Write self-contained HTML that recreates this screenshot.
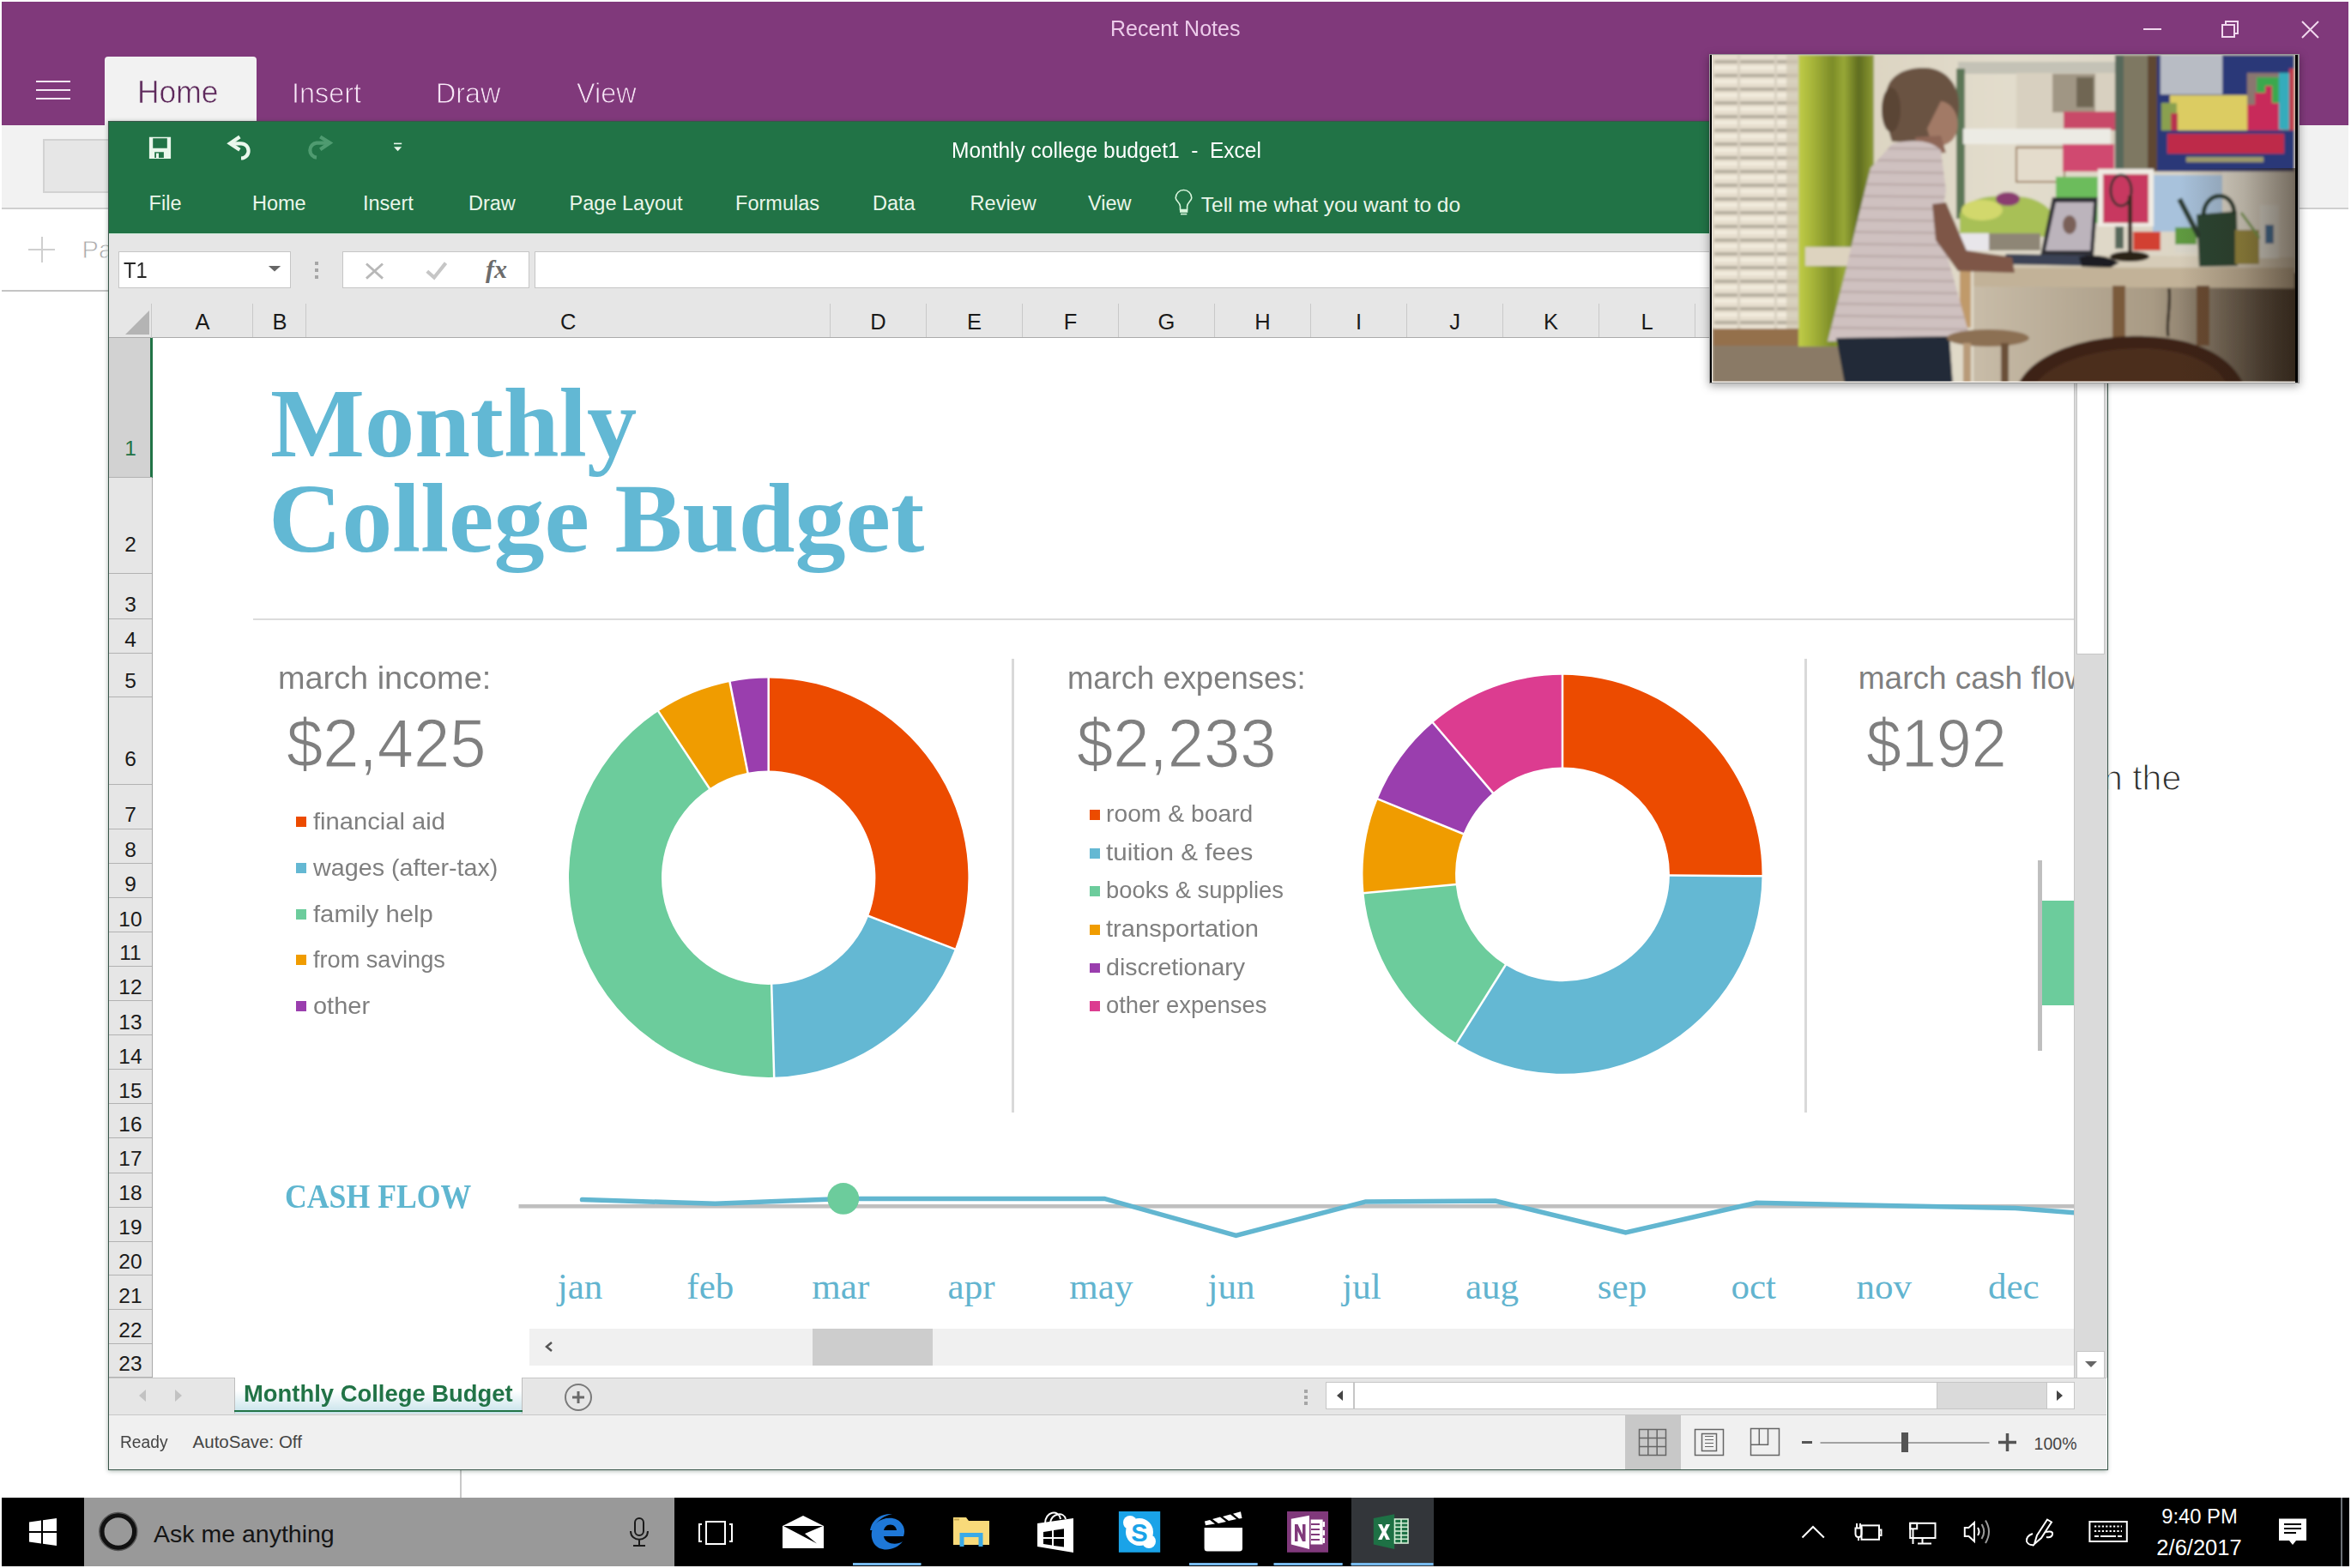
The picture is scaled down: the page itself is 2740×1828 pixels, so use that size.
<!DOCTYPE html><html><head><meta charset="utf-8"><style>
*{margin:0;padding:0;box-sizing:border-box}
html,body{width:2740px;height:1828px;overflow:hidden;background:#fff}
.t{position:absolute;white-space:pre;}
.r{position:absolute}
svg{position:absolute;left:0;top:0}
</style></head><body>
<div class="r" style="left:2.0px;top:2.0px;width:2735.0px;height:144.0px;background:#80397b;"></div>
<div class="r" style="left:42.0px;top:94.0px;width:40.0px;height:2.0px;background:#f4e8f4;"></div>
<div class="r" style="left:42.0px;top:104.0px;width:40.0px;height:2.0px;background:#f4e8f4;"></div>
<div class="r" style="left:42.0px;top:114.0px;width:40.0px;height:2.0px;background:#f4e8f4;"></div>
<div class="r" style="left:122.0px;top:66.0px;width:177.0px;height:80.0px;background:#f2f2f2;border-radius:4px 4px 0 0;"></div>
<div class="t" style="left:159.5px;top:89.5px;font:normal 36.00px/36.00px 'Liberation Sans', sans-serif;color:#5e2a5c;transform:scaleX(0.9850);transform-origin:0 0;-webkit-text-stroke:0.6px #f2f2f2;">Home</div>
<div class="t" style="left:340.3px;top:92.1px;font:normal 33.00px/33.00px 'Liberation Sans', sans-serif;color:#f8e8f8;transform:scaleX(0.9800);transform-origin:0 0;-webkit-text-stroke:0.9px #80397b;">Insert</div>
<div class="t" style="left:508.3px;top:92.1px;font:normal 33.00px/33.00px 'Liberation Sans', sans-serif;color:#f8e8f8;transform:scaleX(0.9800);transform-origin:0 0;-webkit-text-stroke:0.9px #80397b;">Draw</div>
<div class="t" style="left:672.0px;top:92.1px;font:normal 33.00px/33.00px 'Liberation Sans', sans-serif;color:#f8e8f8;transform:scaleX(0.9800);transform-origin:0 0;-webkit-text-stroke:0.9px #80397b;">View</div>
<div class="t" style="left:1294.0px;top:20.9px;font:normal 25.50px/25.50px 'Liberation Sans', sans-serif;color:#eccbea;transform:scaleX(0.9800);transform-origin:0 0;">Recent Notes</div>
<div class="r" style="left:2498.0px;top:33.0px;width:21.0px;height:2.0px;background:#f0d8ee;"></div>
<svg width="2740" height="1828" style="pointer-events:none"><g fill="none" stroke="#f0d8ee" stroke-width="2"><rect x="2590" y="29" width="14" height="14"/><path d="M2594 29V25H2608V39H2604"/><path d="M2683 25L2702 44M2702 25L2683 44"/></g></svg>
<div class="r" style="left:2.0px;top:146.0px;width:2735.0px;height:97.0px;background:#f2f2f2;"></div>
<div class="r" style="left:2.0px;top:242.0px;width:2735.0px;height:2.0px;background:#cfcfcf;"></div>
<div class="r" style="left:50.0px;top:162.0px;width:200.0px;height:63.0px;background:#e6e6e6;border:2px solid #d2d2d2;"></div>
<div class="r" style="left:33.0px;top:290.0px;width:31.0px;height:2.0px;background:#cfcfcf;"></div>
<div class="r" style="left:48.0px;top:276.0px;width:2.0px;height:30.0px;background:#cfcfcf;"></div>
<div class="t" style="left:95.6px;top:276.8px;font:normal 29.00px/29.00px 'Liberation Sans', sans-serif;color:#a8a8a8;-webkit-text-stroke:0.8px #fff;">Page</div>
<div class="r" style="left:2.0px;top:338.0px;width:135.0px;height:2.0px;background:#c4c4c4;"></div>
<div class="r" style="left:536.0px;top:1714.0px;width:2.0px;height:32.0px;background:#c8c8c8;"></div>
<div class="t" style="left:2451.0px;top:887.2px;font:normal 41.00px/41.00px 'Liberation Sans', sans-serif;color:#2a2a2a;-webkit-text-stroke:1.1px #fff;">n the</div>
<div class="r" style="left:126px;top:141px;width:2330px;height:1573px;background:#fff;box-shadow:0 1px 5px rgba(30,60,45,0.38);"></div>
<div class="r" style="left:127.0px;top:141.0px;width:2328.0px;height:132.0px;background:#217346;"></div>
<div class="r" style="left:127.0px;top:272.0px;width:2328.0px;height:1.0px;background:#cfe9d8;"></div>
<div class="t" style="left:1109.3px;top:162.5px;font:normal 25.00px/25.00px 'Liberation Sans', sans-serif;color:#ffffff;transform:scaleX(0.9800);transform-origin:0 0;">Monthly college budget1  -  Excel</div>
<div class="t" style="left:173.6px;top:226.1px;font:normal 23.50px/23.50px 'Liberation Sans', sans-serif;color:#eaf6ea;">File</div>
<div class="t" style="left:294.0px;top:226.1px;font:normal 23.50px/23.50px 'Liberation Sans', sans-serif;color:#eaf6ea;">Home</div>
<div class="t" style="left:423.0px;top:226.1px;font:normal 23.50px/23.50px 'Liberation Sans', sans-serif;color:#eaf6ea;">Insert</div>
<div class="t" style="left:546.0px;top:226.1px;font:normal 23.50px/23.50px 'Liberation Sans', sans-serif;color:#eaf6ea;">Draw</div>
<div class="t" style="left:663.6px;top:226.1px;font:normal 23.50px/23.50px 'Liberation Sans', sans-serif;color:#eaf6ea;">Page Layout</div>
<div class="t" style="left:857.1px;top:226.1px;font:normal 23.50px/23.50px 'Liberation Sans', sans-serif;color:#eaf6ea;">Formulas</div>
<div class="t" style="left:1017.0px;top:226.1px;font:normal 23.50px/23.50px 'Liberation Sans', sans-serif;color:#eaf6ea;">Data</div>
<div class="t" style="left:1130.6px;top:226.1px;font:normal 23.50px/23.50px 'Liberation Sans', sans-serif;color:#eaf6ea;">Review</div>
<div class="t" style="left:1268.0px;top:226.1px;font:normal 23.50px/23.50px 'Liberation Sans', sans-serif;color:#eaf6ea;">View</div>
<div class="t" style="left:1399.8px;top:227.3px;font:normal 24.50px/24.50px 'Liberation Sans', sans-serif;color:#eaf6ea;">Tell me what you want to do</div>
<svg width="2740" height="1828"><path fill-rule="evenodd" fill="#eaf7ec" d="M173.9 159.8H199.1V185.1H173.9Z M178.2 161.2V172.8H194.8V161.2Z M180.2 177.3V184H190.9V177.3Z"/><rect x="182" y="178.6" width="3" height="5.4" fill="#eaf7ec"/><path d="M279.4 159.4L268 167.3L279.4 174.8" fill="none" stroke="#eaf7ec" stroke-width="4.2"/><path d="M268 167.3H281A8.6 8.6 0 0 1 281 184.5" fill="none" stroke="#eaf7ec" stroke-width="4.2"/><path d="M373.2 159.4L384.5 166.6L373.2 174.3" fill="none" stroke="#4f9b70" stroke-width="4.2"/><path d="M384.5 166.6H369A8.6 8.6 0 0 0 369 183.7" fill="none" stroke="#4f9b70" stroke-width="4.2"/><rect x="459" y="166.6" width="9.2" height="1.6" fill="#eaf7ec"/><path d="M459 171.3H468.2L463.6 176.2Z" fill="#eaf7ec"/><g fill="none" stroke="#d8f5dc" stroke-width="1.6"><path d="M1375.5 244.5V240.5C1375.5 236.5 1370.2 234 1370.2 230.8A9.3 9.3 0 1 1 1388.8 230.8C1388.8 234 1383.6 236.5 1383.6 240.5V244.5Z"/></g><rect x="1375" y="244.5" width="9.3" height="3.3" fill="#d8f5dc"/><rect x="1376" y="248.8" width="7.3" height="1.6" fill="#d8f5dc"/></svg>
<div class="r" style="left:127.0px;top:273.0px;width:2328.0px;height:121.0px;background:#e6e6e6;"></div>
<div class="r" style="left:137.5px;top:293.0px;width:201.0px;height:43.0px;background:#fff;border:1px solid #c6c6c6;"></div>
<div class="t" style="left:143.8px;top:303.4px;font:normal 25.00px/25.00px 'Liberation Sans', sans-serif;color:#262626;transform:scaleX(0.9500);transform-origin:0 0;">T1</div>
<div class="r" style="left:399.0px;top:293.0px;width:218.0px;height:43.0px;background:#fff;border:1px solid #c6c6c6;"></div>
<div class="r" style="left:623.0px;top:293.0px;width:1800.0px;height:43.0px;background:#fff;border:1px solid #c6c6c6;"></div>
<div class="r" style="left:367.4px;top:305.2px;width:3.5px;height:3.5px;background:#a6a6a6;"></div>
<div class="r" style="left:367.4px;top:313.0px;width:3.5px;height:3.5px;background:#a6a6a6;"></div>
<div class="r" style="left:367.4px;top:321.1px;width:3.5px;height:3.5px;background:#a6a6a6;"></div>
<svg width="2740" height="1828"><path d="M312.9 310.1H327.2L320 316.6Z" fill="#666"/><path d="M427 307.5L446 324.6M446 307.5L427 324.6" stroke="#b8b8b8" stroke-width="2.8"/><path d="M497.8 316.2L506 323.5L519.5 306.6" fill="none" stroke="#c6c6c6" stroke-width="4.2"/><text x="566" y="324" font-family="Liberation Serif" font-style="italic" font-weight="bold" font-size="30" fill="#6c6c6c">fx</text></svg>
<div class="r" style="left:127.0px;top:393.0px;width:2328.0px;height:1.0px;background:#ababab;"></div>
<div class="r" style="left:294.0px;top:354.0px;width:1.0px;height:39.0px;background:#c9c9c9;"></div>
<div class="t" style="left:236.0px;top:363.4px;font:normal 25.50px/25.50px 'Liberation Sans', sans-serif;color:#1a1a1a;transform:translateX(-50%);transform-origin:0 0;">A</div>
<div class="r" style="left:356.0px;top:354.0px;width:1.0px;height:39.0px;background:#c9c9c9;"></div>
<div class="t" style="left:326.0px;top:363.4px;font:normal 25.50px/25.50px 'Liberation Sans', sans-serif;color:#1a1a1a;transform:translateX(-50%);transform-origin:0 0;">B</div>
<div class="r" style="left:966.5px;top:354.0px;width:1.0px;height:39.0px;background:#c9c9c9;"></div>
<div class="t" style="left:662.2px;top:363.4px;font:normal 25.50px/25.50px 'Liberation Sans', sans-serif;color:#1a1a1a;transform:translateX(-50%);transform-origin:0 0;">C</div>
<div class="r" style="left:1078.5px;top:354.0px;width:1.0px;height:39.0px;background:#c9c9c9;"></div>
<div class="t" style="left:1023.5px;top:363.4px;font:normal 25.50px/25.50px 'Liberation Sans', sans-serif;color:#1a1a1a;transform:translateX(-50%);transform-origin:0 0;">D</div>
<div class="r" style="left:1190.5px;top:354.0px;width:1.0px;height:39.0px;background:#c9c9c9;"></div>
<div class="t" style="left:1135.5px;top:363.4px;font:normal 25.50px/25.50px 'Liberation Sans', sans-serif;color:#1a1a1a;transform:translateX(-50%);transform-origin:0 0;">E</div>
<div class="r" style="left:1302.5px;top:354.0px;width:1.0px;height:39.0px;background:#c9c9c9;"></div>
<div class="t" style="left:1247.5px;top:363.4px;font:normal 25.50px/25.50px 'Liberation Sans', sans-serif;color:#1a1a1a;transform:translateX(-50%);transform-origin:0 0;">F</div>
<div class="r" style="left:1414.5px;top:354.0px;width:1.0px;height:39.0px;background:#c9c9c9;"></div>
<div class="t" style="left:1359.5px;top:363.4px;font:normal 25.50px/25.50px 'Liberation Sans', sans-serif;color:#1a1a1a;transform:translateX(-50%);transform-origin:0 0;">G</div>
<div class="r" style="left:1526.5px;top:354.0px;width:1.0px;height:39.0px;background:#c9c9c9;"></div>
<div class="t" style="left:1471.5px;top:363.4px;font:normal 25.50px/25.50px 'Liberation Sans', sans-serif;color:#1a1a1a;transform:translateX(-50%);transform-origin:0 0;">H</div>
<div class="r" style="left:1638.5px;top:354.0px;width:1.0px;height:39.0px;background:#c9c9c9;"></div>
<div class="t" style="left:1583.5px;top:363.4px;font:normal 25.50px/25.50px 'Liberation Sans', sans-serif;color:#1a1a1a;transform:translateX(-50%);transform-origin:0 0;">I</div>
<div class="r" style="left:1750.5px;top:354.0px;width:1.0px;height:39.0px;background:#c9c9c9;"></div>
<div class="t" style="left:1695.5px;top:363.4px;font:normal 25.50px/25.50px 'Liberation Sans', sans-serif;color:#1a1a1a;transform:translateX(-50%);transform-origin:0 0;">J</div>
<div class="r" style="left:1862.5px;top:354.0px;width:1.0px;height:39.0px;background:#c9c9c9;"></div>
<div class="t" style="left:1807.5px;top:363.4px;font:normal 25.50px/25.50px 'Liberation Sans', sans-serif;color:#1a1a1a;transform:translateX(-50%);transform-origin:0 0;">K</div>
<div class="r" style="left:1974.5px;top:354.0px;width:1.0px;height:39.0px;background:#c9c9c9;"></div>
<div class="t" style="left:1919.5px;top:363.4px;font:normal 25.50px/25.50px 'Liberation Sans', sans-serif;color:#1a1a1a;transform:translateX(-50%);transform-origin:0 0;">L</div>
<div class="r" style="left:2086.5px;top:354.0px;width:1.0px;height:39.0px;background:#c9c9c9;"></div>
<div class="t" style="left:2031.5px;top:363.4px;font:normal 25.50px/25.50px 'Liberation Sans', sans-serif;color:#1a1a1a;transform:translateX(-50%);transform-origin:0 0;">M</div>
<div class="r" style="left:2198.5px;top:354.0px;width:1.0px;height:39.0px;background:#c9c9c9;"></div>
<div class="t" style="left:2143.5px;top:363.4px;font:normal 25.50px/25.50px 'Liberation Sans', sans-serif;color:#1a1a1a;transform:translateX(-50%);transform-origin:0 0;">N</div>
<div class="r" style="left:2310.5px;top:354.0px;width:1.0px;height:39.0px;background:#c9c9c9;"></div>
<div class="t" style="left:2255.5px;top:363.4px;font:normal 25.50px/25.50px 'Liberation Sans', sans-serif;color:#1a1a1a;transform:translateX(-50%);transform-origin:0 0;">O</div>
<div class="r" style="left:176.0px;top:354.0px;width:1.0px;height:40.0px;background:#c9c9c9;"></div>
<div class="r" style="left:127.0px;top:394.0px;width:51.0px;height:1212.0px;background:#e6e6e6;"></div>
<div class="r" style="left:177.0px;top:394.0px;width:1.0px;height:1212.0px;background:#a8a8a8;"></div>
<div class="r" style="left:127.0px;top:394.0px;width:48.0px;height:163.0px;background:#d2d2d2;"></div>
<div class="r" style="left:175.0px;top:394.0px;width:3.0px;height:163.0px;background:#217346;"></div>
<div class="r" style="left:127.0px;top:556.0px;width:50.0px;height:1.0px;background:#b2b2b2;"></div>
<div class="t" style="left:152.0px;top:511.0px;font:normal 24.50px/24.50px 'Liberation Sans', sans-serif;color:#217346;transform:translateX(-50%);transform-origin:0 0;">1</div>
<div class="r" style="left:127.0px;top:668.0px;width:50.0px;height:1.0px;background:#b2b2b2;"></div>
<div class="t" style="left:152.0px;top:623.4px;font:normal 24.50px/24.50px 'Liberation Sans', sans-serif;color:#1a1a1a;transform:translateX(-50%);transform-origin:0 0;">2</div>
<div class="r" style="left:127.0px;top:721.0px;width:50.0px;height:1.0px;background:#b2b2b2;"></div>
<div class="t" style="left:152.0px;top:693.0px;font:normal 24.50px/24.50px 'Liberation Sans', sans-serif;color:#1a1a1a;transform:translateX(-50%);transform-origin:0 0;">3</div>
<div class="r" style="left:127.0px;top:760.5px;width:50.0px;height:1.0px;background:#b2b2b2;"></div>
<div class="t" style="left:152.0px;top:733.7px;font:normal 24.50px/24.50px 'Liberation Sans', sans-serif;color:#1a1a1a;transform:translateX(-50%);transform-origin:0 0;">4</div>
<div class="r" style="left:127.0px;top:812.0px;width:50.0px;height:1.0px;background:#b2b2b2;"></div>
<div class="t" style="left:152.0px;top:782.3px;font:normal 24.50px/24.50px 'Liberation Sans', sans-serif;color:#1a1a1a;transform:translateX(-50%);transform-origin:0 0;">5</div>
<div class="r" style="left:127.0px;top:914.0px;width:50.0px;height:1.0px;background:#b2b2b2;"></div>
<div class="t" style="left:152.0px;top:873.0px;font:normal 24.50px/24.50px 'Liberation Sans', sans-serif;color:#1a1a1a;transform:translateX(-50%);transform-origin:0 0;">6</div>
<div class="r" style="left:127.0px;top:966.0px;width:50.0px;height:1.0px;background:#b2b2b2;"></div>
<div class="t" style="left:152.0px;top:937.7px;font:normal 24.50px/24.50px 'Liberation Sans', sans-serif;color:#1a1a1a;transform:translateX(-50%);transform-origin:0 0;">7</div>
<div class="r" style="left:127.0px;top:1006.0px;width:50.0px;height:1.0px;background:#b2b2b2;"></div>
<div class="t" style="left:152.0px;top:979.3px;font:normal 24.50px/24.50px 'Liberation Sans', sans-serif;color:#1a1a1a;transform:translateX(-50%);transform-origin:0 0;">8</div>
<div class="r" style="left:127.0px;top:1046.0px;width:50.0px;height:1.0px;background:#b2b2b2;"></div>
<div class="t" style="left:152.0px;top:1019.3px;font:normal 24.50px/24.50px 'Liberation Sans', sans-serif;color:#1a1a1a;transform:translateX(-50%);transform-origin:0 0;">9</div>
<div class="r" style="left:127.0px;top:1086.0px;width:50.0px;height:1.0px;background:#b2b2b2;"></div>
<div class="t" style="left:152.0px;top:1059.5px;font:normal 24.50px/24.50px 'Liberation Sans', sans-serif;color:#1a1a1a;transform:translateX(-50%);transform-origin:0 0;">10</div>
<div class="r" style="left:127.0px;top:1126.0px;width:50.0px;height:1.0px;background:#b2b2b2;"></div>
<div class="t" style="left:152.0px;top:1099.3px;font:normal 24.50px/24.50px 'Liberation Sans', sans-serif;color:#1a1a1a;transform:translateX(-50%);transform-origin:0 0;">11</div>
<div class="r" style="left:127.0px;top:1166.0px;width:50.0px;height:1.0px;background:#b2b2b2;"></div>
<div class="t" style="left:152.0px;top:1139.3px;font:normal 24.50px/24.50px 'Liberation Sans', sans-serif;color:#1a1a1a;transform:translateX(-50%);transform-origin:0 0;">12</div>
<div class="r" style="left:127.0px;top:1206.0px;width:50.0px;height:1.0px;background:#b2b2b2;"></div>
<div class="t" style="left:152.0px;top:1180.1px;font:normal 24.50px/24.50px 'Liberation Sans', sans-serif;color:#1a1a1a;transform:translateX(-50%);transform-origin:0 0;">13</div>
<div class="r" style="left:127.0px;top:1246.0px;width:50.0px;height:1.0px;background:#b2b2b2;"></div>
<div class="t" style="left:152.0px;top:1219.8px;font:normal 24.50px/24.50px 'Liberation Sans', sans-serif;color:#1a1a1a;transform:translateX(-50%);transform-origin:0 0;">14</div>
<div class="r" style="left:127.0px;top:1286.0px;width:50.0px;height:1.0px;background:#b2b2b2;"></div>
<div class="t" style="left:152.0px;top:1259.8px;font:normal 24.50px/24.50px 'Liberation Sans', sans-serif;color:#1a1a1a;transform:translateX(-50%);transform-origin:0 0;">15</div>
<div class="r" style="left:127.0px;top:1326.0px;width:50.0px;height:1.0px;background:#b2b2b2;"></div>
<div class="t" style="left:152.0px;top:1299.3px;font:normal 24.50px/24.50px 'Liberation Sans', sans-serif;color:#1a1a1a;transform:translateX(-50%);transform-origin:0 0;">16</div>
<div class="r" style="left:127.0px;top:1366.5px;width:50.0px;height:1.0px;background:#b2b2b2;"></div>
<div class="t" style="left:152.0px;top:1339.3px;font:normal 24.50px/24.50px 'Liberation Sans', sans-serif;color:#1a1a1a;transform:translateX(-50%);transform-origin:0 0;">17</div>
<div class="r" style="left:127.0px;top:1406.5px;width:50.0px;height:1.0px;background:#b2b2b2;"></div>
<div class="t" style="left:152.0px;top:1378.8px;font:normal 24.50px/24.50px 'Liberation Sans', sans-serif;color:#1a1a1a;transform:translateX(-50%);transform-origin:0 0;">18</div>
<div class="r" style="left:127.0px;top:1446.5px;width:50.0px;height:1.0px;background:#b2b2b2;"></div>
<div class="t" style="left:152.0px;top:1419.3px;font:normal 24.50px/24.50px 'Liberation Sans', sans-serif;color:#1a1a1a;transform:translateX(-50%);transform-origin:0 0;">19</div>
<div class="r" style="left:127.0px;top:1486.0px;width:50.0px;height:1.0px;background:#b2b2b2;"></div>
<div class="t" style="left:152.0px;top:1459.3px;font:normal 24.50px/24.50px 'Liberation Sans', sans-serif;color:#1a1a1a;transform:translateX(-50%);transform-origin:0 0;">20</div>
<div class="r" style="left:127.0px;top:1526.0px;width:50.0px;height:1.0px;background:#b2b2b2;"></div>
<div class="t" style="left:152.0px;top:1499.3px;font:normal 24.50px/24.50px 'Liberation Sans', sans-serif;color:#1a1a1a;transform:translateX(-50%);transform-origin:0 0;">21</div>
<div class="r" style="left:127.0px;top:1566.0px;width:50.0px;height:1.0px;background:#b2b2b2;"></div>
<div class="t" style="left:152.0px;top:1539.3px;font:normal 24.50px/24.50px 'Liberation Sans', sans-serif;color:#1a1a1a;transform:translateX(-50%);transform-origin:0 0;">22</div>
<div class="r" style="left:127.0px;top:1605.0px;width:50.0px;height:1.0px;background:#b2b2b2;"></div>
<div class="t" style="left:152.0px;top:1577.9px;font:normal 24.50px/24.50px 'Liberation Sans', sans-serif;color:#1a1a1a;transform:translateX(-50%);transform-origin:0 0;">23</div>
<svg width="2740" height="1828"><path d="M146 390L174 390L174 362Z" fill="#b4b4b4"/></svg>
<div class="t" style="left:315.4px;top:435.7px;font:bold 115.00px/115.00px 'Liberation Serif', serif;color:#62b8d4;transform:scaleX(1.0130);transform-origin:0 0;">Monthly</div>
<div class="t" style="left:313.4px;top:547.4px;font:bold 115.00px/115.00px 'Liberation Serif', serif;color:#62b8d4;transform:scaleX(1.0270);transform-origin:0 0;">College Budget</div>
<div class="r" style="left:295.0px;top:720.5px;width:2122.0px;height:2.0px;background:#dcdcdc;"></div>
<div class="r" style="left:1179.0px;top:768.0px;width:3.0px;height:529.0px;background:#d9d9d9;"></div>
<div class="r" style="left:2103.0px;top:768.0px;width:3.0px;height:529.0px;background:#d9d9d9;"></div>
<div class="t" style="left:324.2px;top:772.2px;font:normal 37.00px/37.00px 'Liberation Sans', sans-serif;color:#7f7f7f;transform:scaleX(1.0230);transform-origin:0 0;">march income:</div>
<div class="t" style="left:334.0px;top:827.0px;font:normal 80.00px/80.00px 'Liberation Sans', sans-serif;color:#7f7f7f;transform:scaleX(0.9500);transform-origin:0 0;-webkit-text-stroke:1.2px #fff;">$2,425</div>
<div class="r" style="left:345.0px;top:952.3px;width:12.0px;height:11.8px;background:#ec4b00;"></div>
<div class="t" style="left:365.0px;top:942.9px;font:normal 28.50px/28.50px 'Liberation Sans', sans-serif;color:#7f7f7f;transform:scaleX(1.0230);transform-origin:0 0;">financial aid</div>
<div class="r" style="left:345.0px;top:1006.0px;width:12.0px;height:11.8px;background:#64b8d3;"></div>
<div class="t" style="left:365.0px;top:996.6px;font:normal 28.50px/28.50px 'Liberation Sans', sans-serif;color:#7f7f7f;transform:scaleX(1.0075);transform-origin:0 0;">wages (after-tax)</div>
<div class="r" style="left:345.0px;top:1060.1px;width:12.0px;height:11.8px;background:#6ccc9c;"></div>
<div class="t" style="left:365.0px;top:1050.7px;font:normal 28.50px/28.50px 'Liberation Sans', sans-serif;color:#7f7f7f;transform:scaleX(1.0260);transform-origin:0 0;">family help</div>
<div class="r" style="left:345.0px;top:1113.2px;width:12.0px;height:11.8px;background:#f09c00;"></div>
<div class="t" style="left:365.0px;top:1103.8px;font:normal 28.50px/28.50px 'Liberation Sans', sans-serif;color:#7f7f7f;transform:scaleX(0.9520);transform-origin:0 0;">from savings</div>
<div class="r" style="left:345.0px;top:1166.9px;width:12.0px;height:11.8px;background:#9a3eae;"></div>
<div class="t" style="left:365.0px;top:1157.5px;font:normal 28.50px/28.50px 'Liberation Sans', sans-serif;color:#7f7f7f;transform:scaleX(1.0170);transform-origin:0 0;">other</div>
<div class="t" style="left:1243.6px;top:772.2px;font:normal 37.00px/37.00px 'Liberation Sans', sans-serif;color:#7f7f7f;transform:scaleX(0.9850);transform-origin:0 0;">march expenses:</div>
<div class="t" style="left:1255.4px;top:827.0px;font:normal 80.00px/80.00px 'Liberation Sans', sans-serif;color:#7f7f7f;transform:scaleX(0.9500);transform-origin:0 0;-webkit-text-stroke:1.2px #fff;">$2,233</div>
<div class="r" style="left:1270.0px;top:944.1px;width:12.0px;height:11.6px;background:#ec4b00;"></div>
<div class="t" style="left:1289.0px;top:935.2px;font:normal 28.00px/28.00px 'Liberation Sans', sans-serif;color:#7f7f7f;transform:scaleX(1.0100);transform-origin:0 0;">room &amp; board</div>
<div class="r" style="left:1270.0px;top:989.3px;width:12.0px;height:11.6px;background:#64b8d3;"></div>
<div class="t" style="left:1289.0px;top:980.4px;font:normal 28.00px/28.00px 'Liberation Sans', sans-serif;color:#7f7f7f;transform:scaleX(1.0580);transform-origin:0 0;">tuition &amp; fees</div>
<div class="r" style="left:1270.0px;top:1033.2px;width:12.0px;height:11.6px;background:#6ccc9c;"></div>
<div class="t" style="left:1289.0px;top:1024.3px;font:normal 28.00px/28.00px 'Liberation Sans', sans-serif;color:#7f7f7f;transform:scaleX(0.9780);transform-origin:0 0;">books &amp; supplies</div>
<div class="r" style="left:1270.0px;top:1078.2px;width:12.0px;height:11.6px;background:#f09c00;"></div>
<div class="t" style="left:1289.0px;top:1069.3px;font:normal 28.00px/28.00px 'Liberation Sans', sans-serif;color:#7f7f7f;transform:scaleX(1.0400);transform-origin:0 0;">transportation</div>
<div class="r" style="left:1270.0px;top:1122.6px;width:12.0px;height:11.6px;background:#9a3eae;"></div>
<div class="t" style="left:1289.0px;top:1113.7px;font:normal 28.00px/28.00px 'Liberation Sans', sans-serif;color:#7f7f7f;transform:scaleX(1.0215);transform-origin:0 0;">discretionary</div>
<div class="r" style="left:1270.0px;top:1167.2px;width:12.0px;height:11.6px;background:#dc3c90;"></div>
<div class="t" style="left:1289.0px;top:1158.3px;font:normal 28.00px/28.00px 'Liberation Sans', sans-serif;color:#7f7f7f;transform:scaleX(0.9790);transform-origin:0 0;">other expenses</div>
<div class="r" style="left:2160px;top:760px;width:257px;height:150px;overflow:hidden">
<div class="t" style="left:5.8px;top:12.2px;font:normal 37.00px/37.00px 'Liberation Sans', sans-serif;color:#7f7f7f;">march cash flow</div>
<div class="t" style="left:15.4px;top:67.0px;font:normal 80.00px/80.00px 'Liberation Sans', sans-serif;color:#7f7f7f;transform:scaleX(0.9190);transform-origin:0 0;-webkit-text-stroke:1.2px #fff;">$192</div>
</div>
<div class="r" style="left:2375.0px;top:1003.0px;width:4.5px;height:222.0px;background:#bfbfbf;"></div>
<div class="r" style="left:2379.5px;top:1050.0px;width:38.0px;height:122.0px;background:#6ccc9c;"></div>
<svg width="2740" height="1828"><path d="M895.70 790.50A232.70 232.70 0 0 1 1112.94 1106.59L1012.12 1067.89A124.70 124.70 0 0 0 895.70 898.50Z" fill="#ec4b00"/><path d="M1112.94 1106.59A232.70 232.70 0 0 1 902.20 1255.81L899.18 1147.85A124.70 124.70 0 0 0 1012.12 1067.89Z" fill="#64b8d3"/><path d="M902.20 1255.81A232.70 232.70 0 0 1 767.26 829.15L826.87 919.21A124.70 124.70 0 0 0 899.18 1147.85Z" fill="#6ccc9c"/><path d="M767.26 829.15A232.70 232.70 0 0 1 850.50 794.93L871.48 900.87A124.70 124.70 0 0 0 826.87 919.21Z" fill="#f09c00"/><path d="M850.50 794.93A232.70 232.70 0 0 1 895.70 790.50L895.70 898.50A124.70 124.70 0 0 0 871.48 900.87Z" fill="#9a3eae"/><line x1="895.70" y1="899.50" x2="895.70" y2="789.50" stroke="#fff" stroke-width="2.5"/><line x1="1011.18" y1="1067.53" x2="1113.88" y2="1106.95" stroke="#fff" stroke-width="2.5"/><line x1="899.15" y1="1146.85" x2="902.23" y2="1256.81" stroke="#fff" stroke-width="2.5"/><line x1="827.43" y1="920.05" x2="766.71" y2="828.32" stroke="#fff" stroke-width="2.5"/><line x1="871.67" y1="901.86" x2="850.31" y2="793.95" stroke="#fff" stroke-width="2.5"/><path d="M1821.00 786.80A232.50 232.50 0 0 1 2053.49 1021.33L1945.90 1020.39A124.90 124.90 0 0 0 1821.00 894.40Z" fill="#ec4b00"/><path d="M2053.49 1021.33A232.50 232.50 0 0 1 1697.45 1216.26L1754.63 1125.11A124.90 124.90 0 0 0 1945.90 1020.39Z" fill="#64b8d3"/><path d="M1697.45 1216.26A232.50 232.50 0 0 1 1589.53 1041.18L1696.65 1031.05A124.90 124.90 0 0 0 1754.63 1125.11Z" fill="#6ccc9c"/><path d="M1589.53 1041.18A232.50 232.50 0 0 1 1605.74 931.45L1705.36 972.11A124.90 124.90 0 0 0 1696.65 1031.05Z" fill="#f09c00"/><path d="M1605.74 931.45A232.50 232.50 0 0 1 1670.00 842.51L1739.88 924.33A124.90 124.90 0 0 0 1705.36 972.11Z" fill="#9a3eae"/><path d="M1670.00 842.51A232.50 232.50 0 0 1 1821.00 786.80L1821.00 894.40A124.90 124.90 0 0 0 1739.88 924.33Z" fill="#dc3c90"/><line x1="1821.00" y1="895.40" x2="1821.00" y2="785.80" stroke="#fff" stroke-width="2.5"/><line x1="1944.90" y1="1020.38" x2="2054.49" y2="1021.34" stroke="#fff" stroke-width="2.5"/><line x1="1755.16" y1="1124.26" x2="1696.92" y2="1217.10" stroke="#fff" stroke-width="2.5"/><line x1="1697.65" y1="1030.96" x2="1588.54" y2="1041.27" stroke="#fff" stroke-width="2.5"/><line x1="1706.28" y1="972.49" x2="1604.81" y2="931.07" stroke="#fff" stroke-width="2.5"/><line x1="1740.53" y1="925.09" x2="1669.35" y2="841.75" stroke="#fff" stroke-width="2.5"/></svg>
<div class="t" style="left:332.0px;top:1374.2px;font:bold 41.00px/41.00px 'Liberation Serif', serif;color:#5fb6d0;transform:scaleX(0.8710);transform-origin:0 0;">CASH FLOW</div>
<svg width="2740" height="1828"><defs><clipPath id="cc"><rect x="600" y="1350" width="1817" height="120"/></clipPath></defs><rect x="604.5" y="1404" width="1812.5" height="4.6" fill="#bfbfbf"/><polyline clip-path="url(#cc)" fill="none" stroke="#62b6d0" stroke-width="5.5" stroke-linejoin="miter" stroke-linecap="round" points="678.5,1398.6 833.5,1403.2 982.8,1397.4 1136.0,1397.4 1287.2,1397.4 1440.5,1440.4 1591.6,1400.9 1742.7,1400.0 1894.6,1436.9 2047.0,1402.2 2198.0,1405.4 2349.0,1408.5 2500.0,1420.0"/><circle cx="982.8" cy="1397.4" r="18.4" fill="#6ccc9c"/></svg>
<div class="t" style="left:676.0px;top:1478.2px;font:normal 43.00px/43.00px 'Liberation Serif', serif;color:#62b4cf;transform:translateX(-50%);transform-origin:0 0;">jan</div>
<div class="t" style="left:827.8px;top:1478.2px;font:normal 43.00px/43.00px 'Liberation Serif', serif;color:#62b4cf;transform:translateX(-50%);transform-origin:0 0;">feb</div>
<div class="t" style="left:979.8px;top:1478.2px;font:normal 43.00px/43.00px 'Liberation Serif', serif;color:#62b4cf;transform:translateX(-50%);transform-origin:0 0;">mar</div>
<div class="t" style="left:1132.0px;top:1478.2px;font:normal 43.00px/43.00px 'Liberation Serif', serif;color:#62b4cf;transform:translateX(-50%);transform-origin:0 0;">apr</div>
<div class="t" style="left:1283.4px;top:1478.2px;font:normal 43.00px/43.00px 'Liberation Serif', serif;color:#62b4cf;transform:translateX(-50%);transform-origin:0 0;">may</div>
<div class="t" style="left:1435.0px;top:1478.2px;font:normal 43.00px/43.00px 'Liberation Serif', serif;color:#62b4cf;transform:translateX(-50%);transform-origin:0 0;">jun</div>
<div class="t" style="left:1587.0px;top:1478.2px;font:normal 43.00px/43.00px 'Liberation Serif', serif;color:#62b4cf;transform:translateX(-50%);transform-origin:0 0;">jul</div>
<div class="t" style="left:1739.0px;top:1478.2px;font:normal 43.00px/43.00px 'Liberation Serif', serif;color:#62b4cf;transform:translateX(-50%);transform-origin:0 0;">aug</div>
<div class="t" style="left:1890.5px;top:1478.2px;font:normal 43.00px/43.00px 'Liberation Serif', serif;color:#62b4cf;transform:translateX(-50%);transform-origin:0 0;">sep</div>
<div class="t" style="left:2043.8px;top:1478.2px;font:normal 43.00px/43.00px 'Liberation Serif', serif;color:#62b4cf;transform:translateX(-50%);transform-origin:0 0;">oct</div>
<div class="t" style="left:2195.8px;top:1478.2px;font:normal 43.00px/43.00px 'Liberation Serif', serif;color:#62b4cf;transform:translateX(-50%);transform-origin:0 0;">nov</div>
<div class="t" style="left:2346.8px;top:1478.2px;font:normal 43.00px/43.00px 'Liberation Serif', serif;color:#62b4cf;transform:translateX(-50%);transform-origin:0 0;">dec</div>
<div class="r" style="left:617.0px;top:1548.5px;width:1800.0px;height:43.0px;background:#f0f0f0;"></div>
<div class="r" style="left:946.5px;top:1548.5px;width:140.5px;height:43.0px;background:#cdcdcd;"></div>
<svg width="2740" height="1828"><path d="M643 1565L637 1570L643 1575" fill="none" stroke="#555" stroke-width="2.5"/></svg>
<div class="r" style="left:2417.0px;top:394.0px;width:39.0px;height:1212.0px;background:#dadada;border-left:1px solid #c6c6c6;"></div>
<div class="r" style="left:2420.0px;top:396.0px;width:33.0px;height:367.0px;background:#fff;border:1px solid #c6c6c6;"></div>
<div class="r" style="left:2420.0px;top:1575.0px;width:33.0px;height:32.0px;background:#fff;border:1px solid #c6c6c6;"></div>
<svg width="2740" height="1828"><path d="M2430 1587H2444L2437 1594Z" fill="#666"/></svg>
<div class="r" style="left:127.0px;top:1606.0px;width:2328.0px;height:43.0px;background:#e6e6e6;border-top:1px solid #c6c6c6;"></div>
<svg width="2740" height="1828"><path d="M170 1620L162 1627L170 1634Z M204 1620L212 1627L204 1634Z" fill="#c2c2c2"/><circle cx="674" cy="1629" r="15" fill="none" stroke="#7a7a7a" stroke-width="2"/><path d="M667 1629H681M674 1622V1636" stroke="#6a6a6a" stroke-width="3"/></svg>
<div class="r" style="left:272.5px;top:1606.0px;width:336.0px;height:42.0px;background:linear-gradient(#ffffff 35%,#c6e2ea);border-left:1px solid #bdbdbd;border-right:1px solid #bdbdbd;"></div>
<div class="r" style="left:272.5px;top:1643.5px;width:336.0px;height:2.2px;background:#217346;"></div>
<div class="t" style="left:283.6px;top:1611.5px;font:bold 27.00px/27.00px 'Liberation Sans', sans-serif;color:#217346;transform:scaleX(1.0150);transform-origin:0 0;">Monthly College Budget</div>
<div class="r" style="left:1520.0px;top:1620.0px;width:4.0px;height:4.0px;background:#a6a6a6;"></div>
<div class="r" style="left:1520.0px;top:1627.0px;width:4.0px;height:4.0px;background:#a6a6a6;"></div>
<div class="r" style="left:1520.0px;top:1634.0px;width:4.0px;height:4.0px;background:#a6a6a6;"></div>
<div class="r" style="left:1545.0px;top:1611.0px;width:873.0px;height:32.0px;background:#dadada;border:1px solid #c6c6c6;"></div>
<div class="r" style="left:1545.0px;top:1611.0px;width:33.0px;height:32.0px;background:#fff;border:1px solid #c6c6c6;"></div>
<div class="r" style="left:1578.0px;top:1611.0px;width:680.0px;height:32.0px;background:#fff;border:1px solid #c6c6c6;"></div>
<div class="r" style="left:2385.0px;top:1611.0px;width:33.0px;height:32.0px;background:#fff;border:1px solid #c6c6c6;"></div>
<svg width="2740" height="1828"><path d="M1565 1621L1558 1627L1565 1633Z M2397 1621L2404 1627L2397 1633Z" fill="#444"/></svg>
<div class="r" style="left:127.0px;top:1649.0px;width:2328.0px;height:64.0px;background:#f0f0f0;"></div>
<div class="r" style="left:127.0px;top:1648.5px;width:2328.0px;height:1.0px;background:#c8c8c8;"></div>
<div class="t" style="left:140.2px;top:1671.1px;font:normal 20.00px/20.00px 'Liberation Sans', sans-serif;color:#444;transform:scaleX(0.9600);transform-origin:0 0;">Ready</div>
<div class="t" style="left:224.6px;top:1670.6px;font:normal 20.50px/20.50px 'Liberation Sans', sans-serif;color:#444;">AutoSave: Off</div>
<div class="r" style="left:1893.5px;top:1649.0px;width:65.0px;height:64.0px;background:#c8c8c8;"></div>
<svg width="2740" height="1828"><g fill="none" stroke="#666" stroke-width="1.5"><rect x="1910.5" y="1666.5" width="31" height="30"/><path d="M1920.8 1666.5V1696.5M1931.2 1666.5V1696.5M1910.5 1676.5H1941.5M1910.5 1686.5H1941.5"/><rect x="1975.5" y="1666.5" width="33" height="30"/><rect x="1983.5" y="1671.5" width="17" height="20"/><path d="M1987 1674.5H1997M1987 1678.5H1997M1987 1682.5H1997M1987 1686.5H1997" stroke-width="1.2"/><rect x="2040.5" y="1665.5" width="33" height="31"/><path d="M2040.5 1684.3H2060.5V1665.5M2050.3 1665.5V1684.3"/><path d="M2121.5 1682H2318.5" stroke="#888"/></g><rect x="2100" y="1680" width="12" height="3" fill="#555"/><rect x="2216" y="1670" width="8" height="23" fill="#555"/><path d="M2329 1681.5H2350M2339.5 1671V1692" stroke="#555" stroke-width="3.5"/></svg>
<div class="t" style="left:2370.6px;top:1674.1px;font:normal 19.50px/19.50px 'Liberation Sans', sans-serif;color:#444;">100%</div>
<div class="r" style="left:126px;top:141px;width:2331px;height:1573px;border:1px solid #3a564a;"></div>
<div class="r" style="left:1992px;top:63px;width:688px;height:384px;background:#9a9a9a;box-shadow:0 3px 10px rgba(0,0,0,0.35)"></div>
<div class="r" style="left:1993px;top:63.5px;width:685px;height:382px;background:#000;"></div>
<div class="r" style="left:1995.0px;top:64.0px;width:680.0px;height:381.5px;background:#f4efe8;"></div>
<svg width="2740" height="1828"><defs><clipPath id="vc"><rect x="1996" y="64" width="679" height="380.5"/></clipPath><filter id="bl" x="-5%" y="-5%" width="110%" height="110%"><feGaussianBlur stdDeviation="1.6"/></filter><linearGradient id="wallg" x1="0" y1="0" x2="1" y2="0"><stop offset="0" stop-color="#d6ccb6"/><stop offset="0.5" stop-color="#e2dccc"/><stop offset="1" stop-color="#d8d0c0"/></linearGradient><linearGradient id="lowg" x1="0" y1="0" x2="1" y2="0"><stop offset="0" stop-color="#c8bca8"/><stop offset="0.55" stop-color="#a89a84"/><stop offset="1" stop-color="#3e3228"/></linearGradient><linearGradient id="curtg" x1="0" y1="0" x2="1" y2="0"><stop offset="0" stop-color="#c0cc48"/><stop offset="0.2" stop-color="#a4b238"/><stop offset="0.45" stop-color="#7c8c28"/><stop offset="0.6" stop-color="#98a836"/><stop offset="0.8" stop-color="#5e6c1e"/><stop offset="1" stop-color="#8e9c34"/></linearGradient></defs><g clip-path="url(#vc)"><g filter="url(#bl)"><rect x="1990" y="60" width="700" height="390" fill="url(#wallg)"/><rect x="2300" y="318" width="380" height="130" fill="url(#lowg)"/><rect x="1996" y="64" width="101" height="320" fill="#e6dece"/><rect x="1998" y="70.0" width="97" height="4" fill="#b4ac9c"/><rect x="1998" y="77.0" width="97" height="4" fill="#f2ecde"/><rect x="1998" y="86.0" width="97" height="4" fill="#b4ac9c"/><rect x="1998" y="93.0" width="97" height="4" fill="#f2ecde"/><rect x="1998" y="102.0" width="97" height="4" fill="#b4ac9c"/><rect x="1998" y="109.0" width="97" height="4" fill="#f2ecde"/><rect x="1998" y="118.0" width="97" height="4" fill="#b4ac9c"/><rect x="1998" y="125.0" width="97" height="4" fill="#f2ecde"/><rect x="1998" y="134.0" width="97" height="4" fill="#b4ac9c"/><rect x="1998" y="141.0" width="97" height="4" fill="#f2ecde"/><rect x="1998" y="150.0" width="97" height="4" fill="#b4ac9c"/><rect x="1998" y="157.0" width="97" height="4" fill="#f2ecde"/><rect x="1998" y="166.0" width="97" height="4" fill="#b4ac9c"/><rect x="1998" y="173.0" width="97" height="4" fill="#f2ecde"/><rect x="1998" y="182.0" width="97" height="4" fill="#b4ac9c"/><rect x="1998" y="189.0" width="97" height="4" fill="#f2ecde"/><rect x="1998" y="198.0" width="97" height="4" fill="#b4ac9c"/><rect x="1998" y="205.0" width="97" height="4" fill="#f2ecde"/><rect x="1998" y="214.0" width="97" height="4" fill="#b4ac9c"/><rect x="1998" y="221.0" width="97" height="4" fill="#f2ecde"/><rect x="1998" y="230.0" width="97" height="4" fill="#b4ac9c"/><rect x="1998" y="237.0" width="97" height="4" fill="#f2ecde"/><rect x="1998" y="246.0" width="97" height="4" fill="#b4ac9c"/><rect x="1998" y="253.0" width="97" height="4" fill="#f2ecde"/><rect x="1998" y="262.0" width="97" height="4" fill="#b4ac9c"/><rect x="1998" y="269.0" width="97" height="4" fill="#f2ecde"/><rect x="1998" y="278.0" width="97" height="4" fill="#b4ac9c"/><rect x="1998" y="285.0" width="97" height="4" fill="#f2ecde"/><rect x="1998" y="294.0" width="97" height="4" fill="#b4ac9c"/><rect x="1998" y="301.0" width="97" height="4" fill="#f2ecde"/><rect x="1998" y="310.0" width="97" height="4" fill="#b4ac9c"/><rect x="1998" y="317.0" width="97" height="4" fill="#f2ecde"/><rect x="1998" y="326.0" width="97" height="4" fill="#b4ac9c"/><rect x="1998" y="333.0" width="97" height="4" fill="#f2ecde"/><rect x="1998" y="342.0" width="97" height="4" fill="#b4ac9c"/><rect x="1998" y="349.0" width="97" height="4" fill="#f2ecde"/><rect x="1998" y="358.0" width="97" height="4" fill="#b4ac9c"/><rect x="1998" y="365.0" width="97" height="4" fill="#f2ecde"/><rect x="1998" y="374.0" width="97" height="4" fill="#b4ac9c"/><rect x="1998" y="381.0" width="97" height="4" fill="#f2ecde"/><rect x="2025" y="64" width="3" height="320" fill="#d8d0c0"/><rect x="2068" y="64" width="3" height="320" fill="#d8d0c0"/><rect x="2082" y="64" width="15" height="320" fill="#cfc6b2" opacity="0.7"/><rect x="1996" y="383" width="104" height="22" fill="#94704c"/><rect x="1996" y="403" width="200" height="45" fill="#8a7a66"/><rect x="2096" y="64" width="88" height="340" fill="url(#curtg)"/><rect x="2104" y="288" width="70" height="22" fill="#ddd3bf"/><rect x="2282" y="72" width="190" height="14" fill="#c4c2b6"/><rect x="2280" y="80" width="10" height="175" fill="#5c7656"/><rect x="2350" y="85" width="118" height="115" fill="#d8d0c0"/><rect x="2392" y="86" width="50" height="45" fill="#a09684"/><rect x="2420" y="90" width="20" height="35" fill="#706652"/><rect x="2405" y="130" width="60" height="22" fill="#c84a68"/><rect x="2350" y="172" width="56" height="40" fill="#e4dccc" stroke="#9a7a58" stroke-width="2"/><rect x="2404" y="168" width="60" height="32" fill="#d04a70"/><rect x="2288" y="150" width="172" height="18" fill="#ecebe4"/><rect x="2465" y="64" width="10" height="226" fill="#56685a"/><rect x="2475" y="64" width="28" height="136" fill="#7e7862"/><rect x="2503" y="64" width="11" height="136" fill="#5e4630"/><rect x="2514" y="64" width="160" height="136" fill="#2a3878"/><rect x="2518" y="64" width="72" height="46" fill="#b8bcc4"/><rect x="2529" y="111" width="90" height="41" fill="#dccc62"/><rect x="2519" y="120" width="18" height="32" fill="#8aa050"/><rect x="2530" y="132" width="8" height="20" fill="#b83050"/><rect x="2619" y="85" width="50" height="67" fill="#8a7670"/><path d="M2619 122H2628V108H2640V96H2652V120H2660V152H2619Z" fill="#c82c5a"/><path d="M2630 108V90H2656V120H2648V100H2640V108Z" fill="#3aa84e"/><rect x="2656" y="85" width="12" height="66" fill="#36acbc"/><rect x="2668" y="80" width="6" height="72" fill="#c03848"/><rect x="2526" y="156" width="136" height="23" fill="#be2a4a"/><rect x="2548" y="183" width="90" height="6" fill="#9c9a6a"/><rect x="2590" y="200" width="84" height="100" fill="#e2ddd0"/><rect x="2509" y="204" width="81" height="66" fill="#a8c2dc"/><rect x="2396" y="206" width="50" height="54" fill="#6cbc5c"/><rect x="2445" y="197" width="65" height="67" fill="#f0ece4"/><rect x="2451" y="203" width="53" height="57" fill="#c83860"/><path d="M2284 250C2290 232 2320 226 2340 230C2360 226 2385 235 2392 250L2392 276L2284 276Z" fill="#a8c056"/><ellipse cx="2310" cy="245" rx="24" ry="12" fill="#d2d86c"/><ellipse cx="2340" cy="232" rx="14" ry="8" fill="#8a3c70"/><rect x="2286" y="272" width="92" height="20" fill="#8e8676"/><rect x="2258" y="272" width="60" height="20" fill="#e8e6ea"/><path d="M2300 296L2674 300L2674 312L2300 312Z" fill="#d6ccb8"/><path d="M2300 312L2674 312L2674 336L2300 334Z" fill="#c2b298"/><rect x="2462" y="333" width="15" height="66" fill="#7a5a3a"/><rect x="2560" y="333" width="15" height="70" fill="#6a4c30"/><rect x="2284" y="312" width="13" height="70" fill="#c09a6a"/><path d="M2528 336C2530 360 2524 380 2527 392" fill="none" stroke="#1a1410" stroke-width="3"/><path d="M2392 230L2445 230L2440 298L2378 298Z" fill="#2e2e36"/><path d="M2396 236L2440 236L2436 292L2384 292Z" fill="#bcb4bc"/><ellipse cx="2412" cy="262" rx="8" ry="11" fill="#7a6058"/><path d="M2338 296L2440 298L2432 310L2334 308Z" fill="#3a4254"/><path d="M2425 304Q2445 296 2470 306L2460 312Z" fill="#1e1e22"/><ellipse cx="2472" cy="222" rx="12" ry="18" fill="none" stroke="#3a3430" stroke-width="3"/><rect x="2480" y="228" width="5" height="68" fill="#3a2c22"/><ellipse cx="2482" cy="299" rx="23" ry="6" fill="#2a2018"/><rect x="2486" y="270" width="32" height="22" fill="#d24030"/><rect x="2535" y="265" width="25" height="20" fill="#5e9a40"/><rect x="2535" y="285" width="25" height="10" fill="#d8d4c8"/><path d="M2560 250L2607 246L2608 310L2563 311Z" fill="#2a4432"/><path d="M2568 252C2568 222 2604 220 2604 250" fill="none" stroke="#22382a" stroke-width="5"/><path d="M2540 232L2563 276" stroke="#2a3a2e" stroke-width="6"/><rect x="2605" y="268" width="28" height="40" fill="#9a8c40"/><path d="M2612 248L2634 278" stroke="#7aa050" stroke-width="3"/><rect x="2634" y="239" width="22" height="62" fill="#e6e6de"/><rect x="2640" y="262" width="10" height="22" fill="#3a70a0"/><path d="M2423 300Q2445 294 2466 304L2458 312L2426 311Z" fill="#1e1e22"/><path d="M2205 165C2200 150 2196 130 2198 110C2200 88 2220 78 2245 79C2270 81 2284 100 2283 125C2282 145 2275 160 2262 168Z" fill="#6a5242"/><ellipse cx="2204" cy="128" rx="11" ry="26" fill="#5a4434"/><path d="M2262 118C2276 120 2284 135 2281 152C2278 166 2266 172 2252 170L2246 150Z" fill="#a27a66"/><path d="M2232 160L2262 158L2268 178L2236 180Z" fill="#8e6656"/><clipPath id="shc"><path d="M2205 168C2225 162 2250 162 2262 175L2268 222L2262 258L2270 300L2295 390L2240 396L2130 398L2150 320L2166 252L2180 196Z"/></clipPath><path d="M2205 168C2225 162 2250 162 2262 175L2268 222L2262 258L2270 300L2295 390L2240 396L2130 398L2150 320L2166 252L2180 196Z" fill="#cfc1c0"/><g clip-path="url(#shc)"><path d="M2120 172 L2300 174" stroke="#ab9a98" stroke-width="3" opacity="0.5"/><path d="M2120 186 L2300 188" stroke="#ab9a98" stroke-width="3" opacity="0.5"/><path d="M2120 200 L2300 202" stroke="#ab9a98" stroke-width="3" opacity="0.5"/><path d="M2120 214 L2300 216" stroke="#ab9a98" stroke-width="3" opacity="0.5"/><path d="M2120 228 L2300 230" stroke="#ab9a98" stroke-width="3" opacity="0.5"/><path d="M2120 242 L2300 244" stroke="#ab9a98" stroke-width="3" opacity="0.5"/><path d="M2120 256 L2300 258" stroke="#ab9a98" stroke-width="3" opacity="0.5"/><path d="M2120 270 L2300 272" stroke="#ab9a98" stroke-width="3" opacity="0.5"/><path d="M2120 284 L2300 286" stroke="#ab9a98" stroke-width="3" opacity="0.5"/><path d="M2120 298 L2300 300" stroke="#ab9a98" stroke-width="3" opacity="0.5"/><path d="M2120 312 L2300 314" stroke="#ab9a98" stroke-width="3" opacity="0.5"/><path d="M2120 326 L2300 328" stroke="#ab9a98" stroke-width="3" opacity="0.5"/><path d="M2120 340 L2300 342" stroke="#ab9a98" stroke-width="3" opacity="0.5"/><path d="M2120 354 L2300 356" stroke="#ab9a98" stroke-width="3" opacity="0.5"/><path d="M2120 368 L2300 370" stroke="#ab9a98" stroke-width="3" opacity="0.5"/><path d="M2120 382 L2300 384" stroke="#ab9a98" stroke-width="3" opacity="0.5"/></g><path d="M2252 238L2268 236L2292 292L2345 300L2348 318L2282 316L2256 280Z" fill="#7e5646"/><path d="M2140 394L2272 392L2276 448L2150 448Z" fill="#232a38"/><ellipse cx="2317" cy="394" rx="48" ry="10" fill="#8c7052"/><rect x="2288" y="400" width="9" height="48" fill="#b89a78"/><rect x="2332" y="400" width="9" height="48" fill="#6a5038"/><path d="M2352 448C2372 408 2440 390 2500 392C2560 394 2600 415 2615 448Z" fill="#3c2418"/><path d="M2372 448C2392 420 2450 405 2500 406C2550 408 2585 425 2595 448Z" fill="#5a3a26" opacity="0.5"/></g><defs><linearGradient id="vig" x1="0" y1="0" x2="1" y2="0"><stop offset="0" stop-color="#2a1e12" stop-opacity="0"/><stop offset="0.55" stop-color="#2a1e12" stop-opacity="0.25"/><stop offset="1" stop-color="#2a1e12" stop-opacity="0.6"/></linearGradient></defs><rect x="2540" y="196" width="136" height="250" fill="url(#vig)"/></g></svg>
<div class="r" style="left:2.0px;top:1746.0px;width:2736.0px;height:80.0px;background:#000000;"></div>
<div class="r" style="left:98.0px;top:1746.0px;width:688.0px;height:80.0px;background:#999999;"></div>
<div class="r" style="left:1574.5px;top:1746.0px;width:96.0px;height:80.0px;background:#33363a;"></div>
<div class="r" style="left:2728.0px;top:1746.0px;width:2.0px;height:80.0px;background:#6c7076;"></div>
<svg width="2740" height="1828"><path d="M34 1774.5L48 1772.6V1785H34Z M50 1772.3L66 1770V1785H50Z M34 1787H48V1799.5L34 1797.6Z M50 1787H66V1802L50 1799.8Z" fill="#fff"/><circle cx="137.8" cy="1785.5" r="19" fill="none" stroke="#111" stroke-width="5.5"/><circle cx="137.8" cy="1785.5" r="22" fill="none" stroke="#555" stroke-width="1.5"/><g fill="none" stroke="#1a1a1a" stroke-width="2"><rect x="740" y="1770" width="10" height="20" rx="5"/><path d="M735 1785C735 1798 755 1798 755 1785M745 1795V1802M738 1802H752"/></g><g fill="none" stroke="#fff" stroke-width="2"><rect x="823" y="1774" width="22" height="26"/><path d="M818 1777H815V1797H818M850 1777H853V1797H850"/></g><path d="M912 1779L936 1767L960 1779V1805H912Z" fill="#fff"/><path d="M913 1779L959 1779L938 1788L952 1799.5Z" fill="#000"/><path d="M1052 1797C1044 1808 1026 1810 1019 1800C1013 1791 1016 1780 1022 1775C1030 1768 1046 1767 1052 1778C1055 1783 1054 1788 1053 1791H1030C1031 1800 1045 1802 1052 1797Z" fill="#1e78d8"/><path d="M1030 1784H1045C1044 1776 1032 1775 1030 1784Z" fill="#000"/><path d="M1014 1784C1016 1772 1026 1764 1040 1765C1030 1767 1021 1773 1017 1784Z" fill="#1e78d8"/><rect x="994" y="1822" width="79.5" height="3" fill="#76b9ed"/><path d="M1111 1769H1126L1129 1773H1153V1801H1111Z" fill="#f8da7a"/><rect x="1112" y="1770.5" width="6" height="2" fill="#c8a850"/><path d="M1121 1803V1789.5H1143V1803" fill="none" stroke="#3aaae8" stroke-width="5"/><path d="M1209 1776L1251 1770V1810L1209 1803Z" fill="#fff"/><path d="M1218 1776C1218 1762 1234 1759 1236 1771M1224 1775C1226 1764 1240 1762 1242 1771" fill="none" stroke="#fff" stroke-width="2"/><path d="M1216 1786L1226 1784.5V1792H1216Z M1228 1784L1240 1782.3V1792H1228Z M1216 1794H1226V1801.5L1216 1800Z M1228 1794H1240V1803.5L1228 1802Z" fill="#000"/><rect x="1303.9" y="1762" width="48.3" height="47.8" fill="#1aa3e8"/><circle cx="1328" cy="1786" r="16" fill="#fff"/><circle cx="1317" cy="1775" r="8" fill="#fff"/><circle cx="1339" cy="1797" r="8" fill="#fff"/><text x="1328" y="1797" font-family="Liberation Sans" font-weight="bold" font-size="29" fill="#1aa3e8" text-anchor="middle">S</text><path d="M1403.6 1781H1448V1805Q1448 1808.5 1444.5 1808.5H1407Q1403.6 1808.5 1403.6 1805Z" fill="#fff"/><path d="M1404 1773.5L1446 1762L1447.5 1770L1405 1778Z" fill="#000"/><path d="M1404 1773.5L1410 1772L1416 1776.5L1405 1778.3Z M1413 1771L1422 1768.5L1429 1774L1420 1776Z M1425 1768L1434 1765.5L1441 1771L1432 1773Z M1437 1764.8L1446 1762.3L1447.5 1770L1444 1770.5Z" fill="#fff"/><rect x="1386" y="1822" width="79.7" height="3" fill="#76b9ed"/><rect x="1500" y="1762" width="48" height="47.8" fill="#80397b"/><path d="M1504.8 1770.7L1526 1766.8V1806L1504.8 1800.6Z" fill="#fff"/><path d="M1509 1797V1777H1512.5L1518 1789V1777H1521.5V1797H1518L1512.5 1785V1797Z" fill="#80397b"/><rect x="1527.6" y="1771.5" width="14" height="29" fill="#fff"/><path d="M1528 1777H1538M1528 1783H1538M1528 1789H1538M1528 1795H1538" stroke="#80397b" stroke-width="2.2"/><path d="M1541.5 1774H1544V1780H1541.5Z M1541.5 1784H1544V1790H1541.5Z M1541.5 1793H1544V1799H1541.5Z" fill="#fff"/><rect x="1484.5" y="1822" width="80.2" height="3" fill="#76b9ed"/><path d="M1600.8 1770L1625.2 1765.2V1806.1L1600.8 1800.6Z" fill="#1e7145"/><path d="M1606 1777H1610.5L1613 1782.5L1615.5 1777H1620L1615.3 1786L1620 1795H1615.5L1613 1789.5L1610.5 1795H1606L1610.7 1786Z" fill="#fff"/><rect x="1625.5" y="1771" width="15.5" height="28" fill="#1e7145"/><g fill="none" stroke="#d6efd8" stroke-width="1.6"><rect x="1625.5" y="1771" width="15.5" height="28"/><path d="M1633 1771V1799M1625.5 1775.7H1641M1625.5 1780.3H1641M1625.5 1785H1641M1625.5 1789.7H1641M1625.5 1794.3H1641"/></g><rect x="1574.5" y="1822" width="96" height="3" fill="#76b9ed"/><g fill="none" stroke="#fff" stroke-width="2"><path d="M2100.5 1792.5L2113 1780L2125.8 1792.5"/><rect x="2169.5" y="1778.4" width="20.5" height="16.4"/><path d="M2190 1783.5H2192.5V1790H2190"/><path d="M2162.5 1781.5V1788Q2162.5 1792 2166 1792Q2169.5 1792 2169.5 1788V1781.5ZM2164 1776V1781.5M2168 1776V1781.5M2166 1792V1796"/><rect x="2226.2" y="1775.8" width="29.3" height="17.2"/><path d="M2240.5 1793V1799.6M2235 1799.6H2251M2229.5 1782V1800"/><rect x="2226.2" y="1775.8" width="8" height="6.5"/><path d="M2289.8 1781V1791H2294.5L2301 1797V1775L2294.5 1781Z"/><path d="M2305 1781Q2308 1785.5 2305 1790"/></g><g fill="none" stroke="#9a9a9a" stroke-width="2"><path d="M2309.5 1777Q2315 1785.5 2309.5 1794"/><path d="M2314 1772.5Q2322 1785.5 2314 1799"/></g><g fill="none" stroke="#fff" stroke-width="2"><path d="M2371 1800L2374 1790L2386 1771.5L2391 1774.5L2379 1793L2371 1800Z"/><path d="M2369 1788Q2361 1791 2362 1797Q2364 1802 2371 1801M2384 1786Q2393 1784 2392 1789Q2391 1793 2385 1792"/><rect x="2435.4" y="1774" width="43.4" height="23"/></g><path d="M2441 1779.5H2473M2441 1785H2473" stroke="#fff" stroke-width="2" stroke-dasharray="2.2 2.2"/><path d="M2441 1791H2446M2448 1791H2466M2468 1791H2473" stroke="#fff" stroke-width="2"/><path d="M2656 1770.5H2688V1796H2676L2672 1801L2668 1796H2656Z" fill="#fff"/><path d="M2662 1777H2682M2662 1782H2682M2662 1787H2676" stroke="#000" stroke-width="1.8"/></svg>
<div class="t" style="left:2563.5px;top:1755.8px;font:normal 23.80px/23.80px 'Liberation Sans', sans-serif;color:#fff;transform:translateX(-50%);transform-origin:0 0;">9:40 PM</div>
<div class="t" style="left:2563.0px;top:1792.0px;font:normal 25.50px/25.50px 'Liberation Sans', sans-serif;color:#fff;transform:translateX(-50%);transform-origin:0 0;">2/6/2017</div>
<div class="t" style="left:179.0px;top:1773.5px;font:normal 28.50px/28.50px 'Liberation Sans', sans-serif;color:#151515;">Ask me anything</div>
</body></html>
